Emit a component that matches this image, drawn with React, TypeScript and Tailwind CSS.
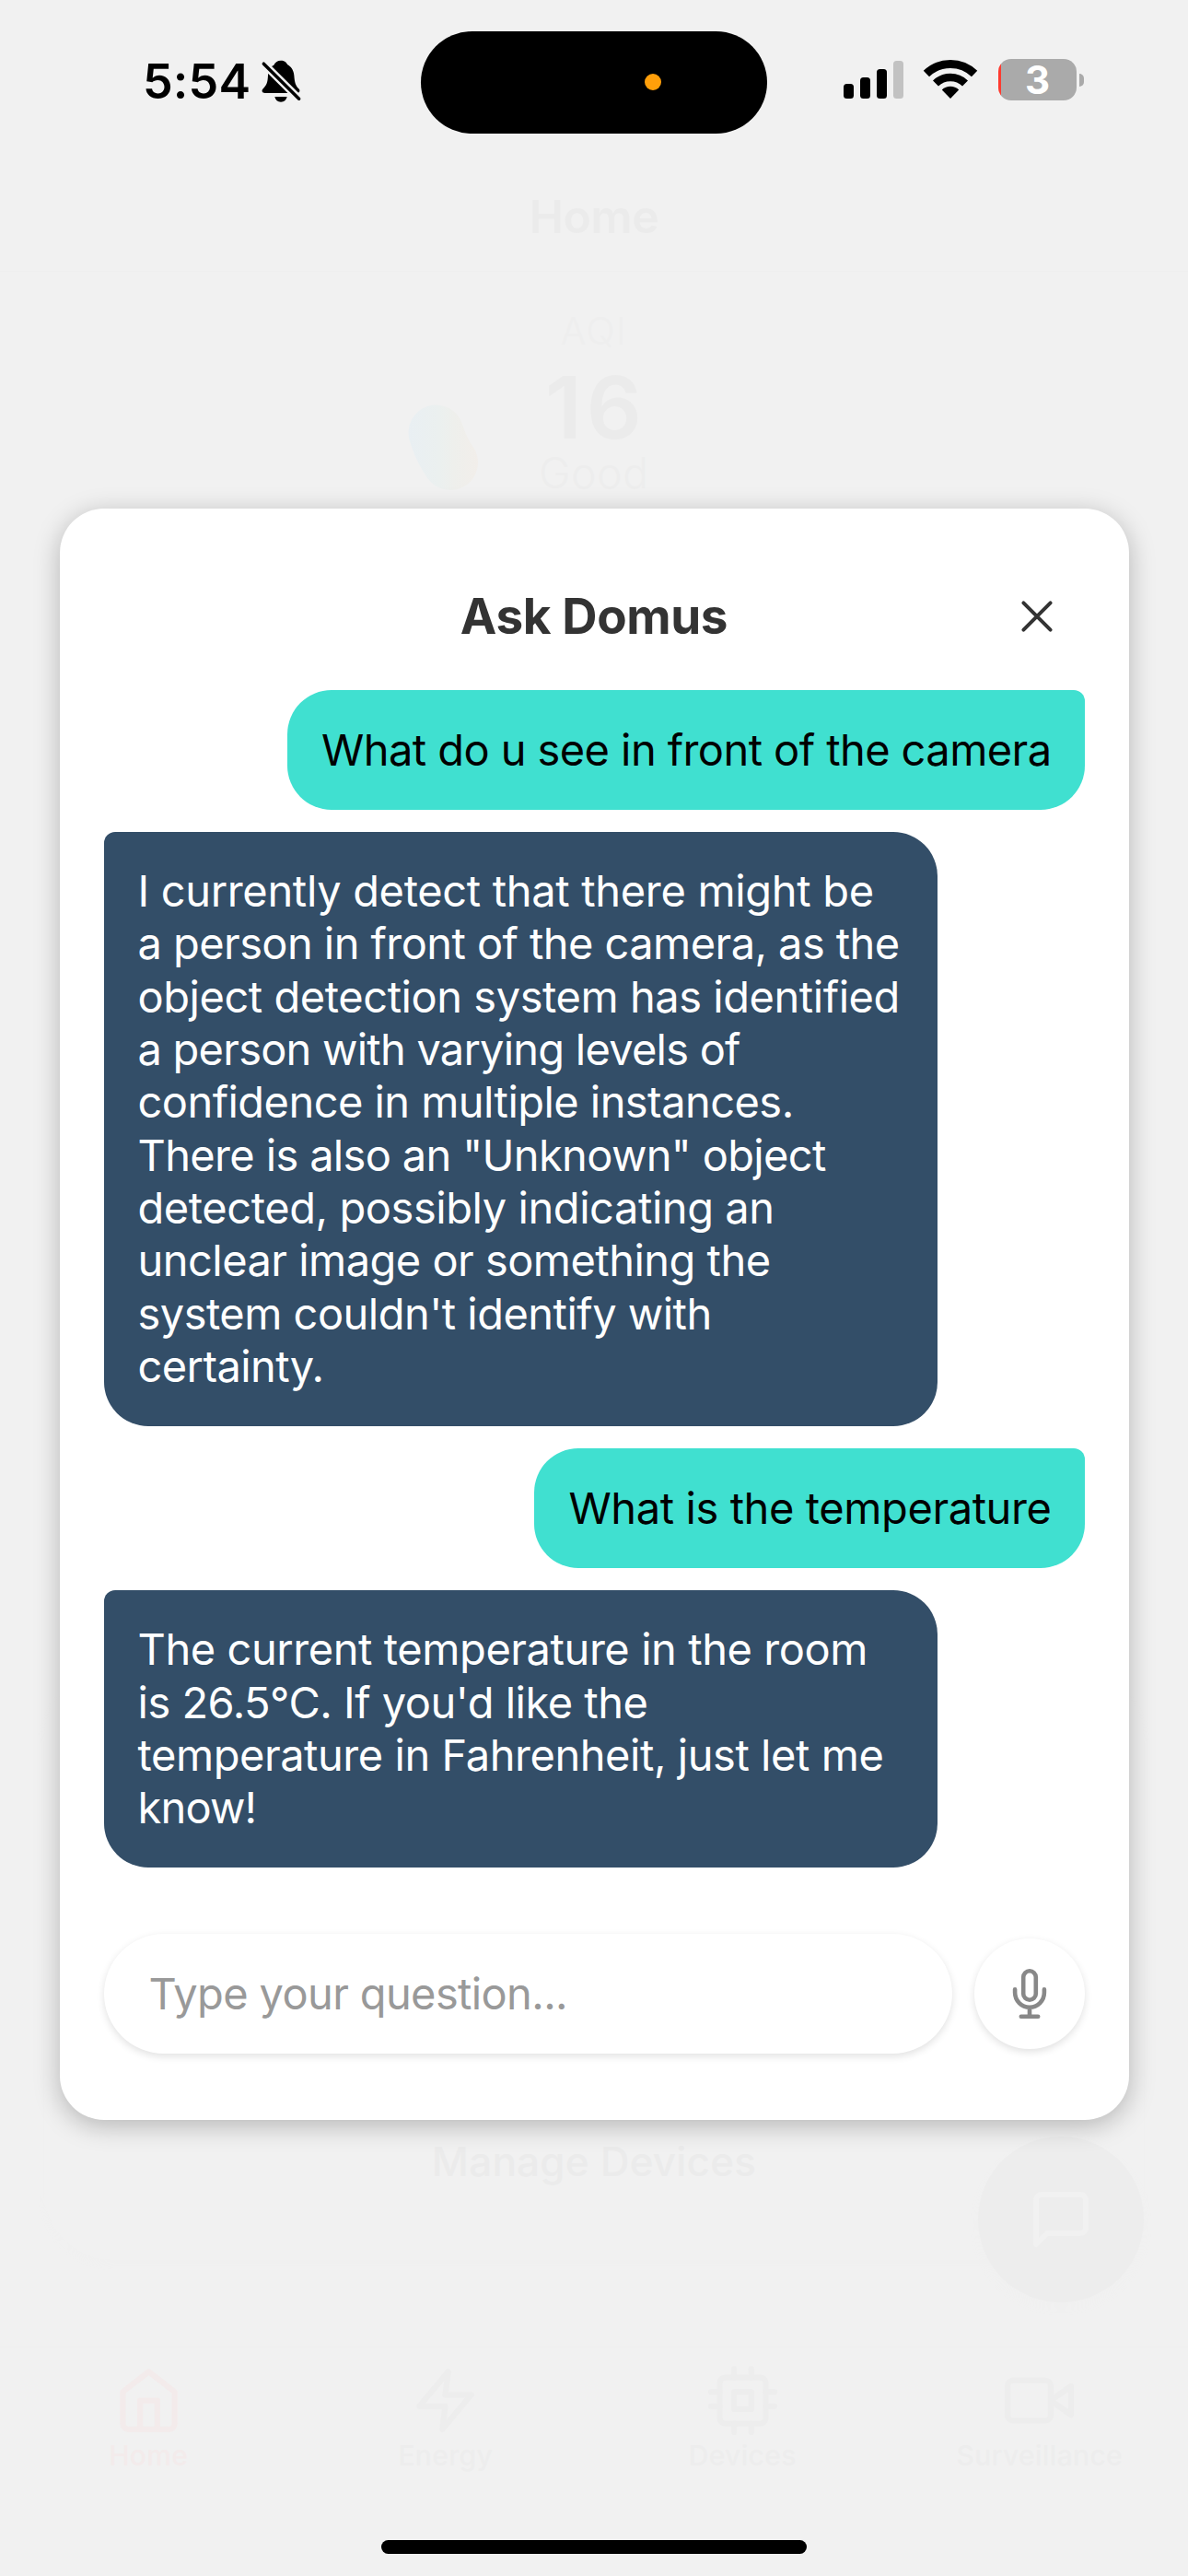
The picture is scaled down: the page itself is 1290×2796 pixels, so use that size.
import type { ReactNode } from "react";
import { FiCpu, FiHome, FiMessageSquare, FiVideo, FiZap } from "react-icons/fi";

type Line = { text: string; tracking: string };
type Message = { from: "user" | "assistant"; lines: Line[] };

const messages: Message[] = [
  {
    from: "user",
    lines: [{ text: "What do u see in front of the camera", tracking: "tracking-[-0.58px]" }],
  },
  {
    from: "assistant",
    lines: [
      { text: "I currently detect that there might be", tracking: "tracking-[-0.33px]" },
      { text: "a person in front of the camera, as the", tracking: "tracking-[-0.57px]" },
      { text: "object detection system has identified", tracking: "tracking-[-0.45px]" },
      { text: "a person with varying levels of", tracking: "tracking-[-0.77px]" },
      { text: "confidence in multiple instances.", tracking: "tracking-[-0.55px]" },
      { text: 'There is also an "Unknown" object', tracking: "tracking-[-0.65px]" },
      { text: "detected, possibly indicating an", tracking: "tracking-[-0.43px]" },
      { text: "unclear image or something the", tracking: "tracking-[-0.53px]" },
      { text: "system couldn't identify with", tracking: "tracking-[-0.52px]" },
      { text: "certainty.", tracking: "tracking-[-0.6px]" },
    ],
  },
  {
    from: "user",
    lines: [{ text: "What is the temperature", tracking: "tracking-[-0.41px]" }],
  },
  {
    from: "assistant",
    lines: [
      { text: "The current temperature in the room", tracking: "tracking-[-0.43px]" },
      { text: "is 26.5°C. If you'd like the", tracking: "tracking-[-0.5px]" },
      { text: "temperature in Fahrenheit, just let me", tracking: "tracking-[-0.45px]" },
      { text: "know!", tracking: "tracking-[-0.84px]" },
    ],
  },
];

function BellOffIcon() {
  return (
    <svg viewBox="460 132 135 143" className="h-[47.67px] w-[45px]">
      <path
        fill="#000"
        d="M526 137C514 137 507 143 503 152C491 158 485 168 484 185C483 210 479 217 468 229C461 237 466 243 474 243H578C588 243 590 235 584 229C573 217 571 208 569 185C567 166 558 157 548 151C543 142 538 137 526 137Z"
      />
      <path fill="#000" d="M506 255H546C543 266 537 272 526 272C515 272 509 266 506 255Z" />
      <path stroke="#f1f1f1" strokeWidth="25" strokeLinecap="round" d="M470 148L585 262" />
      <path stroke="#000" strokeWidth="10.5" strokeLinecap="round" d="M470 147.5L585 261.5" />
    </svg>
  );
}

function WifiIcon() {
  return (
    <svg viewBox="0 0 60 45" className="ml-[21px] h-[45px] w-[60px]" fill="none">
      <path stroke="#000" strokeWidth="9" d="M3.9 16A37.5 37.5 0 0 1 56.1 16" />
      <path stroke="#000" strokeWidth="8.6" d="M14 26.5A23 23 0 0 1 46 26.5" />
      <path fill="#000" d="M30 43L20.8 33.4A13.3 13.3 0 0 1 39.2 33.4Z" />
    </svg>
  );
}

function MicIcon() {
  return (
    <svg viewBox="0 0 38 56" className="h-14 w-[38px]" fill="none" stroke="#888" strokeWidth="4.6" strokeLinecap="round">
      <rect x="12.2" y="3.3" width="13.6" height="31.4" rx="6.8" />
      <path d="M3.1 23.3v3.5a15.9 15.9 0 0 0 31.8 0v-3.5M19 42.7v10M9.8 52.7h18.4" />
    </svg>
  );
}

function StatusBar() {
  return (
    <div className="flex h-[177px]">
      <div className="flex h-[176px] w-[457px] items-center pl-[155px]">
        <span className="w-[128px] pt-0.5 text-[52px] leading-none font-semibold tracking-[0.17px]">5:54</span>
        <BellOffIcon />
      </div>
      <div className="mt-[33.5px] flex h-[111px] w-[376px] items-center rounded-full bg-black">
        <div className="ml-[243px] size-[18px] rounded-full bg-[#ff9f0a]" />
      </div>
      <div className="flex h-[173px] flex-1 items-center pl-[83px]">
        <div className="flex h-[41px] items-end gap-[7px]">
          <div className="h-4 w-[11px] rounded-[3.5px] bg-black" />
          <div className="h-[23px] w-[11px] rounded-[3.5px] bg-black" />
          <div className="h-8 w-[11px] rounded-[3.5px] bg-black" />
          <div className="h-[41px] w-[11px] rounded-[3.5px] bg-[#c2c2c2]" />
        </div>
        <WifiIcon />
        <div className="ml-[22px] flex h-[45px] w-[85px] items-center justify-center rounded-[14px] bg-[linear-gradient(90deg,#ff3b30_3.5px,#aaaaaa_3.5px)] text-[42px] leading-none font-bold text-white">
          3
        </div>
        <div className="ml-[3px] h-[14px] w-[5px] rounded-r-full bg-[#aaaaaa]" />
      </div>
    </div>
  );
}

function Tab({ icon, label, className }: { icon: ReactNode; label: string; className: string }) {
  return (
    <div className={`flex flex-1 flex-col items-center gap-[4.5px] pt-[19.5px] ${className}`}>
      {icon}
      <span className="text-[30px] leading-9 font-medium tracking-[0.35px]">{label}</span>
    </div>
  );
}

function HomeScreen() {
  return (
    <div className="flex h-full flex-col">
      <StatusBar />
      <header className="flex h-[118px] items-center justify-center border-b border-[#efefef] text-[50px] font-semibold tracking-[-0.4px] text-[#ebebeb]">
        Home
      </header>
      <section className="relative flex flex-col items-center pt-[39px]">
        <span className="text-[41px] leading-[50px] font-light tracking-[1.4px] text-[#eeeeee]">AQI</span>
        <span className="mt-[11px] pl-1 text-[94px] leading-[94px] font-semibold tracking-[5px] text-[#ebebeb]">16</span>
        <span className="-mt-px text-[46px] leading-[50px] font-light tracking-[0.75px] text-[#ededed]">Good</span>
        <svg viewBox="0 0 78 100" className="absolute top-[143px] left-[442px] h-[100px] w-[78px]">
          <defs>
            <linearGradient id="gauge" gradientUnits="userSpaceOnUse" x1="0" y1="0" x2="78" y2="0">
              <stop offset="0" stopColor="#e9eff3" />
              <stop offset="0.45" stopColor="#ebf0ef" />
              <stop offset="0.65" stopColor="#eeefec" />
              <stop offset="1" stopColor="#f2eeea" />
            </linearGradient>
          </defs>
          <path d="M31.5 31.5Q37 50 47 64" fill="none" stroke="url(#gauge)" strokeWidth="60" strokeLinecap="round" />
        </svg>
      </section>
      <section className="mx-12 mt-auto mb-[94px] flex h-[640px] items-end justify-center rounded-[75px] pb-20 shadow-[0_5px_8px_#f0f0f0]">
        <span className="text-[44px] leading-[54px] font-medium tracking-[0.2px] text-[#ebebeb]">Manage Devices</span>
      </section>
      <nav className="flex h-[249px] border-t border-[#efefef] text-[#ededed]">
        <Tab icon={<FiHome size={75} />} label="Home" className="text-[#f3ebeb]" />
        <Tab icon={<FiZap size={75} />} label="Energy" className="" />
        <Tab icon={<FiCpu size={75} />} label="Devices" className="" />
        <Tab icon={<FiVideo size={75} />} label="Surveillance" className="" />
      </nav>
      <div className="absolute top-[2319px] left-[1062px] flex size-[180px] items-center justify-center rounded-full bg-[#ededed] text-[#f1f1f1] shadow-[0_6px_12px_#f0f0f0]">
        <FiMessageSquare size={72} />
      </div>
      <div className="absolute bottom-6 left-[414px] h-[15px] w-[462px] rounded-full bg-black" />
    </div>
  );
}

function Bubble({ message }: { message: Message }) {
  const look =
    message.from === "user"
      ? "self-end rounded-tr-[12px] bg-[#40e0d0] text-black"
      : "w-[905px] self-start rounded-tl-[12px] bg-[#334e68] text-white";
  return (
    <div className={`rounded-[48px] pt-[35.5px] pr-9 pb-[36.9px] pl-[37px] text-[47px] leading-[57.3px] ${look}`}>
      {message.lines.map((line) => (
        <div key={line.text} className={`whitespace-nowrap ${line.tracking}`}>
          {line.text}
        </div>
      ))}
    </div>
  );
}

function AskDialog() {
  return (
    <div className="absolute inset-0 flex justify-center pt-[552px]">
      <div className="flex h-[1749px] w-[1161px] flex-col rounded-[48px] bg-white px-12 pt-12 shadow-[0_6px_28px_rgba(0,0,0,0.25)]">
        <div className="grid h-[137px] grid-cols-[1fr_auto_1fr] items-center">
          <span />
          <h1 className="pt-0.5 text-[53px] leading-none font-bold tracking-[-0.39px] text-[#333333]">Ask Domus</h1>
          <button className="mr-[34px] justify-self-end">
            <svg viewBox="0 0 36 36" className="size-9" stroke="#333" strokeWidth="4" strokeLinecap="round">
              <path d="M3.4 3.4L32.6 32.6M32.6 3.4L3.4 32.6" />
            </svg>
          </button>
        </div>
        <div className="mt-3 flex flex-col gap-6">
          {messages.map((message) => (
            <Bubble key={message.lines[0].text} message={message} />
          ))}
        </div>
        <div className="mt-auto mb-[72px] flex items-center gap-6">
          <div className="flex h-[130px] flex-1 items-center rounded-full bg-white pb-px pl-[49px] text-[47px] leading-none tracking-[-0.63px] text-[#999999] shadow-[0_3px_8px_rgba(0,0,0,0.12)]">
            Type your question...
          </div>
          <button className="flex size-[120px] items-center justify-center rounded-full bg-white shadow-[0_3px_8px_rgba(0,0,0,0.12)]">
            <MicIcon />
          </button>
        </div>
      </div>
    </div>
  );
}

export default function App() {
  return (
    <div className="relative h-[2796px] w-[1290px] overflow-hidden bg-[#f1f1f1] font-['Inter',sans-serif] text-black">
      <HomeScreen />
      <AskDialog />
    </div>
  );
}
